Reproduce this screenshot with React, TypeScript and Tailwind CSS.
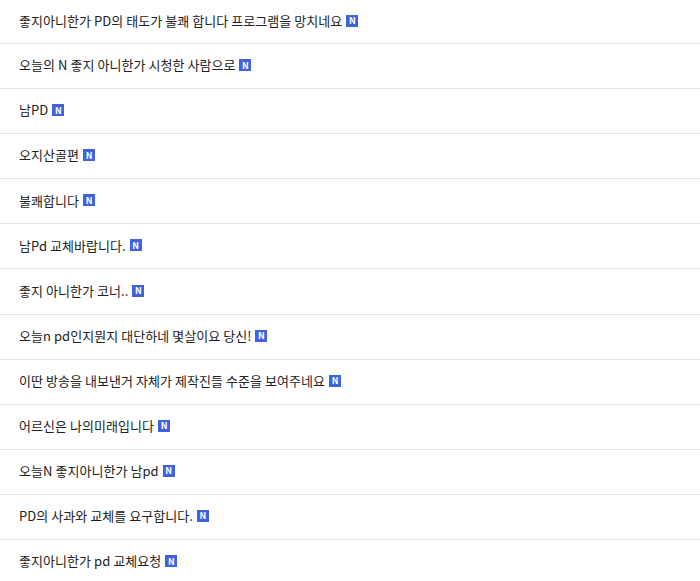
const items = [
  "좋지아니한가 PD의 태도가 불쾌 합니다 프로그램을 망치네요",
  "오늘의 N 좋지 아니한가 시청한 사람으로",
  "남PD",
  "오지산골편",
  "불쾌합니다",
  "남Pd 교체바랍니다.",
  "좋지 아니한가 코너..",
  "오늘n pd인지뭔지 대단하네 몇살이요 당신!",
  "이딴 방송을 내보낸거 자체가 제작진들 수준을 보여주네요",
  "어르신은 나의미래입니다",
  "오늘N 좋지아니한가 남pd",
  "PD의 사과와 교체를 요구합니다.",
  "좋지아니한가 pd 교체요청",
]

function NewBadge() {
  return (
    <span className="ml-[4px] inline-flex h-[12px] w-[12px] items-center justify-center bg-[#4062dd] text-[9px] font-bold leading-none text-white">
      N
    </span>
  )
}

export default function App() {
  return (
    <div
      className="w-[700px] bg-white text-[13px] text-[#222]"
      style={{ fontFamily: '"Noto Sans CJK KR", "Noto Sans", sans-serif' }}
    >
      <ul>
        {items.map((text, i) => (
          <li
            key={i}
            className="flex h-[45.1px] items-center border-b border-[#e4e4e4] pl-[19px] pb-[2px] first:h-[44px]"
          >
            <span className="tracking-[0.05px]">{text}</span>
            <NewBadge />
          </li>
        ))}
      </ul>
    </div>
  )
}
